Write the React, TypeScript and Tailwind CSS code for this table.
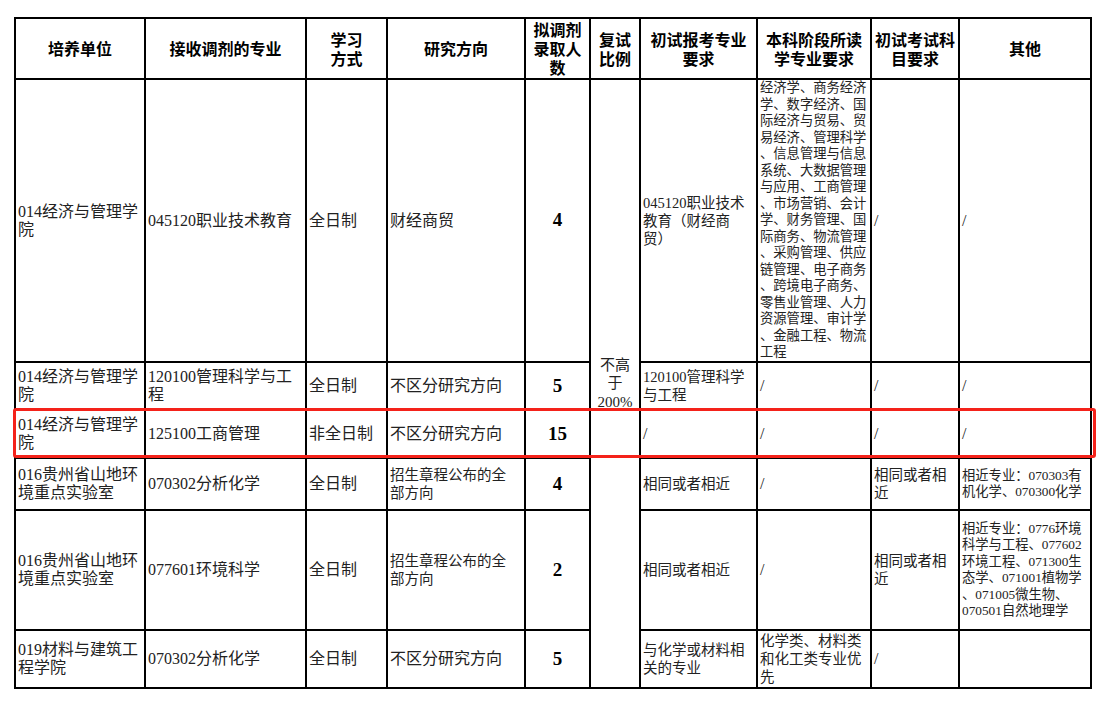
import React from 'react';

const colWidths = [
  'w-[130px]',
  'w-[161px]',
  'w-[81px]',
  'w-[138px]',
  'w-[65px]',
  'w-[50px]',
  'w-[117px]',
  'w-[114px]',
  'w-[88px]',
  'w-[132px]',
];

const headers = [
  '培养单位',
  '接收调剂的专业',
  '学习\n方式',
  '研究方向',
  '拟调剂\n录取人\n数',
  '复试\n比例',
  '初试报考专业\n要求',
  '本科阶段所读\n学专业要求',
  '初试考试科\n目要求',
  '其他',
];

// body text sizes
const t16 = 'text-[16px] leading-[18px]';
const t14 = 'text-[14.5px] leading-[18px]';
const t13 = 'text-[13.3px] leading-[16.5px]';
const num = "text-center font-bold text-[19px] font-['Liberation_Serif',serif] text-black";

type Cell = { t: string; c: string };

const rowHeights = ['h-[283px]', 'h-[48px]', 'h-[48px]', 'h-[52px]', 'h-[120px]', 'h-[58px]'];

const undergrad = [
  '经济学、商务经济',
  '学、数字经济、国',
  '际经济与贸易、贸',
  '易经济、管理科学',
  '、信息管理与信息',
  '系统、大数据管理',
  '与应用、工商管理',
  '、市场营销、会计',
  '学、财务管理、国',
  '际商务、物流管理',
  '、采购管理、供应',
  '链管理、电子商务',
  '、跨境电子商务、',
  '零售业管理、人力',
  '资源管理、审计学',
  '、金融工程、物流',
  '工程',
].join('\n');

const rows: Cell[][] = [
  [
    { t: '014经济与管理学\n院', c: t16 },
    { t: '045120职业技术教育', c: t16 },
    { t: '全日制', c: t16 },
    { t: '财经商贸', c: t16 },
    { t: '4', c: num },
    { t: '045120职业技术\n教育（财经商\n贸）', c: t14 },
    { t: undergrad, c: t13 },
    { t: '/', c: t16 },
    { t: '/', c: t16 },
  ],
  [
    { t: '014经济与管理学\n院', c: t16 },
    { t: '120100管理科学与工\n程', c: t16 },
    { t: '全日制', c: t16 },
    { t: '不区分研究方向', c: t16 },
    { t: '5', c: num },
    { t: '120100管理科学\n与工程', c: t14 },
    { t: '/', c: t16 },
    { t: '/', c: t16 },
    { t: '/', c: t16 },
  ],
  [
    { t: '014经济与管理学\n院', c: t16 },
    { t: '125100工商管理', c: t16 },
    { t: '非全日制', c: t16 },
    { t: '不区分研究方向', c: t16 },
    { t: '15', c: num },
    { t: '/', c: t16 },
    { t: '/', c: t16 },
    { t: '/', c: t16 },
    { t: '/', c: t16 },
  ],
  [
    { t: '016贵州省山地环\n境重点实验室', c: t16 },
    { t: '070302分析化学', c: t16 },
    { t: '全日制', c: t16 },
    { t: '招生章程公布的全\n部方向', c: t14 },
    { t: '4', c: num },
    { t: '相同或者相近', c: t14 },
    { t: '/', c: t16 },
    { t: '相同或者相\n近', c: t14 },
    { t: '相近专业：070303有\n机化学、070300化学', c: t13 },
  ],
  [
    { t: '016贵州省山地环\n境重点实验室', c: t16 },
    { t: '077601环境科学', c: t16 },
    { t: '全日制', c: t16 },
    { t: '招生章程公布的全\n部方向', c: t14 },
    { t: '2', c: num },
    { t: '相同或者相近', c: t14 },
    { t: '/', c: t16 },
    { t: '相同或者相\n近', c: t14 },
    {
      t: '相近专业：0776环境\n科学与工程、077602\n环境工程、071300生\n态学、071001植物学\n、071005微生物、\n070501自然地理学',
      c: t13,
    },
  ],
  [
    { t: '019材料与建筑工\n程学院', c: t16 },
    { t: '070302分析化学', c: t16 },
    { t: '全日制', c: t16 },
    { t: '不区分研究方向', c: t16 },
    { t: '5', c: num },
    { t: '与化学或材料相\n关的专业', c: t14 },
    { t: '化学类、材料类\n和化工类专业优\n先', c: t14 },
    { t: '/', c: t16 },
    { t: '', c: t16 },
  ],
];

function Lines({ text }: { text: string }) {
  return (
    <>
      {text.split('\n').map((line, i) => (
        <React.Fragment key={i}>
          {i > 0 && <br />}
          {line}
        </React.Fragment>
      ))}
    </>
  );
}

const cellBase = 'border-2 border-black align-middle px-[2px] whitespace-nowrap';

export default function App() {
  return (
    <div className="min-h-screen bg-white pt-[17px] pl-[14px]">
      <div className="relative w-fit">
        <table className="table-fixed border-collapse w-[1078px] font-['Liberation_Serif','Noto_Sans_CJK_SC',serif] text-[#222]">
          <colgroup>
            {colWidths.map((w, i) => (
              <col key={i} className={w} />
            ))}
          </colgroup>
          <thead>
            <tr className="h-[61px]">
              {headers.map((h, i) => (
                <th
                  key={i}
                  className={`${cellBase} text-center font-bold text-black text-[16px] leading-[19px] font-['Noto_Sans_CJK_SC',sans-serif]`}
                >
                  <Lines text={h} />
                </th>
              ))}
            </tr>
          </thead>
          <tbody>
            {rows.map((row, r) => (
              <tr key={r} className={rowHeights[r]}>
                {row.slice(0, 5).map((cell, i) => (
                  <td key={i} className={`${cellBase} ${cell.c}`}>
                    <Lines text={cell.t} />
                  </td>
                ))}
                {r === 0 && (
                  <td rowSpan={6} className={`${cellBase} text-center text-[15px] leading-[18.3px]`}>
                    不高
                    <br />于<br />
                    200%
                  </td>
                )}
                {row.slice(5).map((cell, i) => (
                  <td key={i + 5} className={`${cellBase} ${cell.c}`}>
                    <Lines text={cell.t} />
                  </td>
                ))}
              </tr>
            ))}
          </tbody>
        </table>
        {/* highlight frame over the 125100 row */}
        <div className="absolute left-[-1px] top-[391px] w-[1083px] h-[50px] border-[3px] border-[#f4221a] rounded-[3px] pointer-events-none" />
      </div>
    </div>
  );
}
